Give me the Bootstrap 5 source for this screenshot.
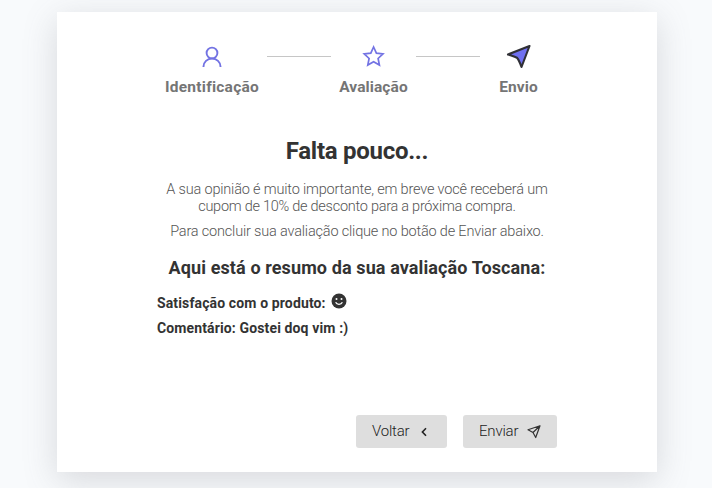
<!DOCTYPE html>
<html lang="pt-BR">
<head>
<meta charset="utf-8">
<title>Avaliação</title>
<link href="https://cdn.jsdelivr.net/npm/bootstrap@5.3.0/dist/css/bootstrap.min.css" rel="stylesheet">
<style>
body{background:#f8fafc;font-family:Roboto,"Liberation Sans",sans-serif;color:#333;height:488px;overflow:hidden;padding-top:12px}
.panel{width:600px;height:460px;margin-left:57px;background:#fff;padding:31px 100px 24px;box-shadow:0 8px 32px rgba(100,100,111,.22)}
.step{color:#757575;font-weight:700;font-size:15.5px;line-height:18px;white-space:nowrap;letter-spacing:.1px}
.step svg{margin-bottom:9px}
.s1{width:110px;letter-spacing:.25px}.s2{width:85px}.s3{width:77px}
.rule{width:64px;height:1px;background:#c6c6c6;margin-top:13px}
.title{font-size:24px;line-height:28px;font-weight:700;margin:41px 0 0;letter-spacing:-.28px}
.copy{font-size:14.5px;line-height:17.4px;font-weight:300;color:#555;white-space:nowrap;letter-spacing:-.18px}
.copy .tight{letter-spacing:-.26px}
.copy-last{margin-top:7.4px}
.sub{font-size:18px;line-height:22px;font-weight:700;white-space:nowrap;letter-spacing:.11px}
.line{font-size:14px;line-height:17px;font-weight:700;white-space:nowrap;letter-spacing:.13px}
.face{margin:-2px 0 0 5px}
.act{width:91px;height:33px;border:0;border-radius:3px;background:#dedede;color:#222;font-size:15px;font-weight:300;padding:0 16px;letter-spacing:-.2px}
.act:last-child{width:94px}
</style>
<script src="https://cdn.jsdelivr.net/npm/bootstrap@5.3.0/dist/js/bootstrap.bundle.min.js"></script>
</head>
<body>
<main class="panel d-flex flex-column">
<div class="d-flex">
<div class="step s1 d-flex flex-column align-items-center"><svg width="26" height="26" viewBox="0 0 26 26" fill="none" stroke="#7373e3" stroke-width="1.9"><circle cx="13" cy="10" r="5.4"/><path d="M4.5 24v-.5a8.5 8 0 0 1 17 0v.5"/></svg><span>Identificação</span></div>
<div class="rule"></div>
<div class="step s2 d-flex flex-column align-items-center"><svg width="26" height="26" viewBox="0 0 26 26" fill="none" stroke="#7373e3" stroke-width="1.7" stroke-linejoin="miter"><path d="m12.6 4 2.8 6.1 6.6.8-4.9 4.6 1.3 6.6-5.8-3.3-5.8 3.3 1.3-6.6-4.9-4.6 6.6-.8Z"/></svg><span>Avaliação</span></div>
<div class="rule"></div>
<div class="step s3 d-flex flex-column align-items-center"><svg width="26" height="26" viewBox="0 0 26 26" fill="#7070f0" stroke="#303036" stroke-width="2.1" stroke-linejoin="round"><path d="M23.5 3 2 11.5c3.8 1.3 6.5 2 9 3.2 2.1 2.4 3 5.1 4.5 9.3Z"/></svg><span>Envio</span></div>
</div>
<h1 class="title text-center"><span>Falta pouco...</span></h1>
<p class="copy text-center mb-0 mt-3"><span>A sua opinião é muito importante, em breve você receberá um</span><br><span class="tight">cupom de 10% de desconto para a próxima compra.</span></p>
<p class="copy copy-last text-center mb-0"><span>Para concluir sua avaliação clique no botão de Enviar abaixo.</span></p>
<h2 class="sub text-center mb-0 mt-3"><span>Aqui está o resumo da sua avaliação Toscana:</span></h2>
<p class="line mb-0 mt-3 d-flex"><span>Satisfação com o produto:</span><svg class="face" width="16" height="16" viewBox="0 0 16 16"><circle cx="8" cy="8" r="7.5" fill="#333"/><circle cx="5.5" cy="6" r="1" fill="#fff"/><circle cx="10.5" cy="6" r="1" fill="#fff"/><path d="M4.6 9.2a3.8 3.8 0 0 0 6.8 0" fill="none" stroke="#fff" stroke-width="1.3"/></svg></p>
<p class="line mb-0 mt-2"><span>Comentário: Gostei doq vim :)</span></p>
<div class="d-flex justify-content-end gap-3 mt-auto">
<button class="act d-flex align-items-center justify-content-between"><span>Voltar</span><svg width="14" height="14" viewBox="0 0 14 14" fill="none" stroke="#222" stroke-width="1.6"><path d="M9 3.2 5.4 7 9 10.8"/></svg></button>
<button class="act d-flex align-items-center justify-content-between"><span>Enviar</span><svg width="14" height="14" viewBox="0 0 14 14" fill="none" stroke="#333" stroke-width="1.2" stroke-linejoin="round"><path d="M13 .8 1 4.8l5 2.7 2.7 5ZM13 .8 6 7.5"/></svg></button>
</div>
</main>
</body>
</html>
